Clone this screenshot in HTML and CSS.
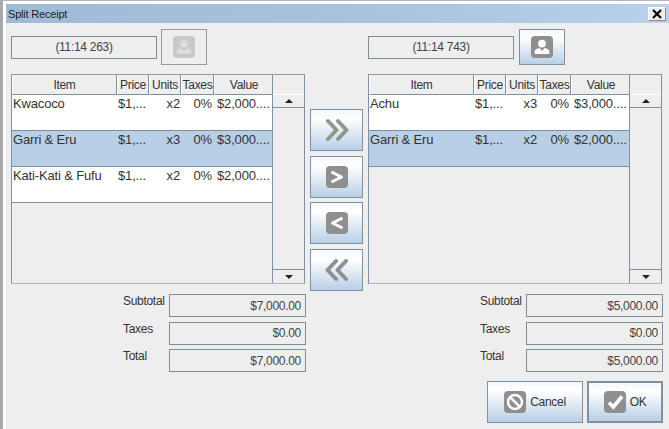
FILE: index.html
```html
<!DOCTYPE html>
<html lang="en">
<head>
<meta charset="utf-8">
<title>Split Receipt</title>
<link rel="stylesheet" href="styles.css">
</head>
<body>
<svg class="defs" width="0" height="0" aria-hidden="true">
  <symbol id="user" viewBox="0 0 22 22">
    <rect width="22" height="22" rx="4" fill="currentColor"/>
    <circle cx="11" cy="7.6" r="3.9" fill="var(--ink)"/>
    <path d="M3.6 18v-2.2c0-2.2 2.4-3.2 4.9-3.8l2.5 3 2.5-3c2.5.6 4.9 1.6 4.9 3.8V18z" fill="var(--ink)"/>
  </symbol>
  <symbol id="double-right" viewBox="0 0 24 24">
    <path d="M3 3l8.5 9L3 21M13 3l8.500 9L13 21" fill="none" stroke="currentColor" stroke-width="4" stroke-linecap="round" stroke-linejoin="round"/>
  </symbol>
  <symbol id="double-left" viewBox="0 0 24 24">
    <path d="M11 3L2.500 12l8.500 9M21 3l-8.500 9 8.500 9" fill="none" stroke="currentColor" stroke-width="4" stroke-linecap="round" stroke-linejoin="round"/>
  </symbol>
  <symbol id="one-right" viewBox="0 0 22 22">
    <rect width="22" height="22" rx="4" fill="#8f8f8f"/>
    <path d="M5.500 6l10 5-10 5" fill="none" stroke="#fff" stroke-width="3" stroke-linejoin="round"/>
  </symbol>
  <symbol id="one-left" viewBox="0 0 22 22">
    <rect width="22" height="22" rx="4" fill="#8f8f8f"/>
    <path d="M16.500 6l-10 5 10 5" fill="none" stroke="#fff" stroke-width="3" stroke-linejoin="round"/>
  </symbol>
  <symbol id="cancel" viewBox="0 0 22 22">
    <rect width="22" height="22" rx="4" fill="#8f8f8f"/>
    <circle cx="11" cy="11" r="7" fill="none" stroke="#fff" stroke-width="2.400"/>
    <path d="M6.300 6.300l9.400 9.400" stroke="#fff" stroke-width="2.400"/>
  </symbol>
  <symbol id="check" viewBox="0 0 22 22">
    <rect width="22" height="22" rx="4" fill="#8f8f8f"/>
    <path d="M5 11.500l4.300 4.500L18 5.500" fill="none" stroke="#fff" stroke-width="3.600"/>
  </symbol>
</svg>

<div class="window">
  <header class="titlebar">
    <span class="title">Split Receipt</span>
    <button class="close" type="button" aria-label="Close">
      <svg viewBox="0 0 12 12" width="12" height="12"><path d="M2 2l8 8M10 2l-8 8" stroke="#000" stroke-width="2.200"/></svg>
    </button>
  </header>

  <main class="content">
    <section class="pane">
      <div class="ticket">
        <div class="field field-ticket">(11:14 263)</div>
        <button class="grad ticket-btn is-disabled" type="button"><svg class="icon-22"><use href="#user"/></svg></button>
      </div>
      <div class="table">
        <div class="table-main">
          <div class="row head"><span>Item</span><span>Price</span><span>Units</span><span>Taxes</span><span>Value</span></div>
          <div class="row line"><span class="name">Kwacoco</span><span class="price">$1,...</span><span class="num">x2</span><span class="num pct">0%</span><span class="value">$2,000....</span></div>
          <div class="row line selected"><span class="name">Garri &amp; Eru</span><span class="price">$1,...</span><span class="num">x3</span><span class="num pct">0%</span><span class="value">$3,000....</span></div>
          <div class="row line"><span class="name">Kati-Kati &amp; Fufu</span><span class="price">$1,...</span><span class="num">x2</span><span class="num pct">0%</span><span class="value">$2,000....</span></div>
        </div>
        <div class="scrollbar"><div class="scroll-corner"></div><div class="scroll-btn"><i class="up"></i></div><div class="scroll-track"></div><div class="scroll-btn"><i class="down"></i></div></div>
      </div>
      <div class="totals">
        <div class="total-row"><span class="total-label">Subtotal</span><div class="field field-total">$7,000.00</div></div>
        <div class="total-row"><span class="total-label">Taxes</span><div class="field field-total">$0.00</div></div>
        <div class="total-row"><span class="total-label">Total</span><div class="field field-total">$7,000.00</div></div>
      </div>
    </section>

    <nav class="mover">
      <button class="grad move" type="button"><svg class="icon-chev chev-green"><use href="#double-right"/></svg></button>
      <button class="grad move" type="button"><svg class="icon-22"><use href="#one-right"/></svg></button>
      <button class="grad move move-tight" type="button"><svg class="icon-22"><use href="#one-left"/></svg></button>
      <button class="grad move" type="button"><svg class="icon-chev"><use href="#double-left"/></svg></button>
    </nav>

    <section class="pane">
      <div class="ticket ticket-wide">
        <div class="field field-ticket">(11:14 743)</div>
        <button class="grad ticket-btn" type="button"><svg class="icon-22"><use href="#user"/></svg></button>
      </div>
      <div class="table">
        <div class="table-main">
          <div class="row head"><span>Item</span><span>Price</span><span>Units</span><span>Taxes</span><span>Value</span></div>
          <div class="row line"><span class="name">Achu</span><span class="price">$1,...</span><span class="num">x3</span><span class="num pct">0%</span><span class="value">$3,000....</span></div>
          <div class="row line selected"><span class="name">Garri &amp; Eru</span><span class="price">$1,...</span><span class="num">x2</span><span class="num pct">0%</span><span class="value">$2,000....</span></div>
        </div>
        <div class="scrollbar"><div class="scroll-corner"></div><div class="scroll-btn"><i class="up"></i></div><div class="scroll-track"></div><div class="scroll-btn"><i class="down"></i></div></div>
      </div>
      <div class="totals">
        <div class="total-row"><span class="total-label">Subtotal</span><div class="field field-total">$5,000.00</div></div>
        <div class="total-row"><span class="total-label">Taxes</span><div class="field field-total">$0.00</div></div>
        <div class="total-row"><span class="total-label">Total</span><div class="field field-total">$5,000.00</div></div>
      </div>
      <div class="actions">
        <button class="grad action action-cancel" type="button"><svg class="icon-22"><use href="#cancel"/></svg><span>Cancel</span></button>
        <button class="grad action action-ok" type="button"><svg class="icon-22"><use href="#check"/></svg><span>OK</span></button>
      </div>
    </section>
  </main>
</div>
</body>
</html>
```

FILE: styles.css
```css
* { box-sizing: border-box; }

html, body {
  margin: 0;
  width: 669px;
  height: 429px;
  overflow: hidden;
}

body {
  background: #eeeeee;
  color: #333;
  font-family: "Liberation Sans", Arial, sans-serif;
  font-size: 12px;
  letter-spacing: -0.3px;
}

.defs { position: absolute; }

.window {
  height: 429px;
  border-top: 1px solid #b4b4b4;
  border-left: 3px solid #a8a8a8;
  box-shadow: inset 3px 0 0 #fff;
  display: flex;
  flex-direction: column;
}

.titlebar {
  margin: 3px 0 0 3px;
  height: 19px;
  flex: none;
  display: flex;
  align-items: center;
  justify-content: space-between;
  padding: 0 3px 0 2px;
  background: linear-gradient(90deg, #a0bbd8, #a8c1dc 50%, #b9d1ea);
  box-shadow: 0 -3px 0 #fff, -3px 0 0 #fff, -3px -3px 0 #fff;
  color: #222;
  font-size: 11px;
  letter-spacing: -0.2px;
}

.close {
  width: 18px;
  height: 14px;
  padding: 0;
  display: flex;
  align-items: center;
  justify-content: center;
  background: #eeeeee;
  border: 1px solid;
  border-color: #fff #8a8a8a #8a8a8a #fff;
}

.content {
  display: grid;
  grid-template-columns: 295px 62px 295px;
  padding: 6px 0 0 8px;
  align-items: start;
}

.mover {
  width: 53px;
  margin-left: 4px;
  padding-top: 80px;
  display: flex;
  flex-direction: column;
  gap: 5px;
}

.move {
  width: 53px;
  height: 42px;
}

.move-tight { margin-top: -1px; }

.grad {
  padding: 0;
  display: flex;
  align-items: center;
  justify-content: center;
  border: 1px solid #7f90a3;
  background: linear-gradient(#f4f8fc, #ffffff 22%, #b9cfe6);
  color: #8f8f8f;
  font: inherit;
  letter-spacing: inherit;
  --ink: #fff;
}

.icon-22 {
  width: 22px;
  height: 22px;
  flex: none;
}

.icon-chev {
  width: 24px;
  height: 24px;
  color: #8f8f8f;
}

.chev-green { color: #8c9a8c; }

.ticket {
  height: 36px;
  display: flex;
  align-items: center;
  gap: 4px;
}

.ticket-wide { gap: 5px; }

.field {
  height: 23px;
  border: 1px solid #7f8b99;
  background: #eeeeee;
  display: flex;
  align-items: center;
  color: #444;
}

.field-ticket {
  width: 146px;
  justify-content: center;
}

.ticket-btn {
  width: 46px;
  height: 36px;
}

.is-disabled {
  background: #eeeeee;
  border-color: #9a9a9a;
  color: #c8c8c8;
  --ink: #dcdcdc;
}

.table {
  margin-top: 9px;
  width: 294px;
  height: 210px;
  display: flex;
  border-top: 1px solid #8b9bac;
  border-left: 1px solid #7f90a3;
  border-bottom: 1px solid #a9b6c3;
}

.table-main {
  width: 261px;
  border-right: 1px solid #7f90a3;
}

.row {
  display: grid;
  grid-template-columns: 105px 32px 32px 33px 59px;
}

.head { height: 20px; }

.head span {
  display: flex;
  align-items: center;
  justify-content: center;
  border-right: 1px solid #7f90a3;
  border-bottom: 1px solid #7f90a3;
  border-left: 1px solid #fff;
  color: #333;
  white-space: nowrap;
  overflow: hidden;
}

.head span:last-child { border-right: 0; }

.line {
  height: 36px;
  background: #fff;
  border-bottom: 1px solid #7f90a3;
  font-size: 13px;
  letter-spacing: -0.15px;
  line-height: 18px;
  color: #333;
}

.selected { background: #b8cfe6; }

.line span { white-space: nowrap; }

.name { padding-left: 1px; }

.price { padding-left: 1px; }

.num {
  text-align: right;
  padding-right: 1px;
}

.pct { padding-right: 2px; }

.value { padding-left: 3px; }

.scrollbar {
  width: 32px;
  height: 208px;
  display: flex;
  flex-direction: column;
  border-right: 1px solid #7f90a3;
}

.scroll-corner {
  height: 19px;
  flex: none;
}

.scroll-btn {
  height: 14px;
  flex: none;
  display: flex;
  align-items: center;
  justify-content: center;
  border-top: 1px solid #fff;
  border-bottom: 1px solid #7f90a3;
  background: #eeeeee;
}

.scroll-track + .scroll-btn {
  border-top: 1px solid #7f90a3;
  border-bottom: 0;
}

.scroll-track { flex: 1; }

.up, .down {
  width: 0;
  height: 0;
  border-left: 4px solid transparent;
  border-right: 4px solid transparent;
}

.up { border-bottom: 4px solid #222; }
.down { border-top: 4px solid #222; }

.totals {
  margin-top: 10px;
  display: flex;
  flex-direction: column;
  gap: 4.500px;
  padding-left: 112px;
}

.total-row {
  display: flex;
  align-items: flex-start;
}

.total-label {
  width: 46px;
  line-height: 14px;
  color: #333;
}

.field-total {
  width: 137px;
  justify-content: flex-end;
  padding-right: 4px;
}

.actions {
  margin-top: 9px;
  display: flex;
  justify-content: flex-end;
  gap: 4px;
}

.action {
  height: 42px;
  gap: 4px;
  color: #333;
}

.action-cancel { width: 96px; }

.action-ok {
  width: 76px;
  border: 2px solid #7f90a3;
}
```
